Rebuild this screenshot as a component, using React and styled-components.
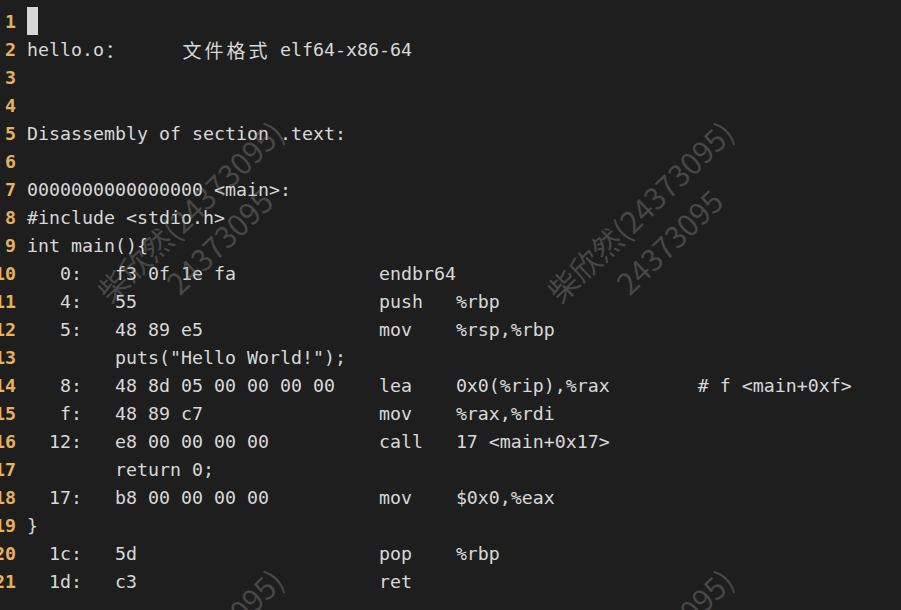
import React from "react";
import styled, { createGlobalStyle } from "styled-components";

const Global = createGlobalStyle`
  html, body { margin: 0; padding: 0; background: #1e1e1e; }
  body { width: 901px; height: 610px; overflow: hidden; }
`;

const Editor = styled.div`
  position: relative;
  width: 901px;
  height: 610px;
  overflow: hidden;
  background: #1e1e1e;
  padding-top: 8px;
  box-sizing: border-box;
  font-family: "DejaVu Sans Mono", "Noto Sans CJK SC", monospace;
  font-size: 18.27px;
  color: #d8d8d8;
`;

const Row = styled.div`
  display: flex;
  height: 28px;
  line-height: 28px;
`;

const Gutter = styled.span`
  flex: none;
  width: 22px;
  margin-left: -6px;
  margin-right: 11px;
  text-align: right;
  font-weight: bold;
  color: #e6b35c;
`;

const Code = styled.span`
  white-space: pre;
`;

const Wide = styled.span`
  display: inline-block;
  width: 22px;
  text-align: center;
  font-family: "Noto Sans CJK SC", sans-serif;
  font-size: 19px;
  vertical-align: top;
`;

const Cursor = styled.span`
  display: inline-block;
  width: 11px;
  height: 28px;
  margin-top: -1px;
  background: #d6d6d6;
  vertical-align: top;
`;

const Overlay = styled.div`
  position: absolute;
  inset: 0;
  pointer-events: none;
`;

const Mark = styled.div`
  position: absolute;
  transform: translate(-50%, -50%) rotate(-44deg);
  font-family: "Noto Sans CJK SC", sans-serif;
  font-size: 30px;
  line-height: 42px;
  text-align: center;
  white-space: nowrap;
  color: rgba(140, 140, 140, 0.38);
`;

const ins = (addr, bytes, asm = "") =>
  (addr + ":").padStart(5) + "   " + (asm ? bytes.padEnd(24) + asm : bytes);

const lines = [
  { cursor: true },
  {
    node: (
      <>
        {"hello.o"}
        <Wide>：</Wide>
        {"     "}
        {"文件格式".split("").map((c, i) => (
          <Wide key={i}>{c}</Wide>
        ))}
        {" elf64-x86-64"}
      </>
    ),
  },
  { text: "" },
  { text: "" },
  { text: "Disassembly of section .text:" },
  { text: "" },
  { text: "0000000000000000 <main>:" },
  { text: "#include <stdio.h>" },
  { text: "int main(){" },
  { text: ins("0", "f3 0f 1e fa", "endbr64") },
  { text: ins("4", "55", "push   %rbp") },
  { text: ins("5", "48 89 e5", "mov    %rsp,%rbp") },
  { text: '        puts("Hello World!");' },
  {
    text: ins(
      "8",
      "48 8d 05 00 00 00 00",
      "lea    0x0(%rip),%rax        # f <main+0xf>"
    ),
  },
  { text: ins("f", "48 89 c7", "mov    %rax,%rdi") },
  { text: ins("12", "e8 00 00 00 00", "call   17 <main+0x17>") },
  { text: "        return 0;" },
  { text: ins("17", "b8 00 00 00 00", "mov    $0x0,%eax") },
  { text: "}" },
  { text: ins("1c", "5d", "pop    %rbp") },
  { text: ins("1d", "c3", "ret") },
];

const marks = [
  [204, 226],
  [654, 226],
  [204, 674],
  [654, 674],
];

export default function App() {
  return (
    <>
      <Global />
      <Editor>
        {lines.map((l, i) => (
          <Row key={i}>
            <Gutter>{i + 1}</Gutter>
            <Code>{l.cursor ? <Cursor /> : l.node ?? l.text}</Code>
          </Row>
        ))}
        <Overlay>
          {marks.map(([x, y], i) => (
            <Mark key={i} style={{ left: x, top: y }}>
              柴欣然(24373095)
              <br />
              24373095
            </Mark>
          ))}
        </Overlay>
      </Editor>
    </>
  );
}
